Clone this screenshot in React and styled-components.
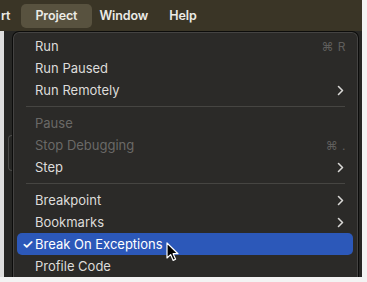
import React from "react";
import styled, { createGlobalStyle } from "styled-components";

const sections = [
  [
    { label: "Run", shortcut: "⌘ R" },
    { label: "Run Paused" },
    { label: "Run Remotely", submenu: true },
  ],
  [
    { label: "Pause", disabled: true },
    { label: "Stop Debugging", shortcut: "⌘ .", disabled: true },
    { label: "Step", submenu: true },
  ],
  [
    { label: "Breakpoint", submenu: true },
    { label: "Bookmarks", submenu: true },
    { label: "Break On Exceptions", checked: true, active: true },
    { label: "Profile Code" },
  ],
];

const Chevron = () => (
  <svg width="7" height="11" viewBox="0 0 7 11">
    <path d="M1.5 1.5 L5.5 5.5 L1.5 9.5" fill="none" stroke="currentColor" strokeWidth="1.6" strokeLinecap="round" strokeLinejoin="round" />
  </svg>
);

const Pointer = () => (
  <svg width="14" height="20" viewBox="0 0 14 20">
    <path d="M1 1 L1 16 L4.6 12.6 L7.2 18.4 L9.6 17.3 L7.1 11.7 L12 11.7 Z" fill="#000" stroke="#fff" strokeWidth="1.2" strokeLinejoin="round" />
  </svg>
);

const App = () => (
  <Page>
    <GlobalStyle />
    <Screen>
      <MenuBar>
        <BarItem $gap={11}>rt</BarItem>
        <BarItem $open $gap={7}>Project</BarItem>
        <BarItem $gap={21}>Window</BarItem>
        <BarItem>Help</BarItem>
      </MenuBar>
      <Desktop>
        <Ghost />
        <Menu>
          {sections.map((items, i) => (
            <React.Fragment key={i}>
              {i > 0 && <Separator />}
              {items.map((it) => (
                <Row key={it.label} $active={it.active} $disabled={it.disabled}>
                  <Check>{it.checked ? "✓" : ""}</Check>
                  <RowLabel>{it.label}</RowLabel>
                  {it.shortcut && <Shortcut>{it.shortcut}</Shortcut>}
                  {it.submenu && (
                    <Arrow>
                      <Chevron />
                    </Arrow>
                  )}
                  {it.active && (
                    <Cursor>
                      <Pointer />
                    </Cursor>
                  )}
                </Row>
              ))}
            </React.Fragment>
          ))}
        </Menu>
      </Desktop>
    </Screen>
  </Page>
);

const GlobalStyle = createGlobalStyle`
  html, body {
    margin: 0;
    padding: 0;
    background: #f3f3f3;
  }
  body {
    font-family: Inter, "Open Sans", sans-serif;
    -webkit-font-smoothing: antialiased;
  }
`;

const Page = styled.div`
  width: 367px;
  height: 282px;
  padding: 0 5px 0 0;
  box-sizing: border-box;
  overflow: hidden;
`;

const Screen = styled.div`
  height: 277px;
  background: #262624;
  display: flex;
  flex-direction: column;
  overflow: hidden;
`;

const MenuBar = styled.div`
  height: 31px;
  flex-shrink: 0;
  background: #3a3526;
  display: flex;
  align-items: center;
  padding-left: 1px;
`;

const BarItem = styled.div`
  height: 24px;
  display: flex;
  align-items: center;
  padding: ${(p) => (p.$open ? "0 15px 0 14px" : "0")};
  margin-right: ${(p) => p.$gap || 0}px;
  border-radius: 5px;
  background: ${(p) => (p.$open ? "#58523f" : "transparent")};
  color: #ecebe6;
  font-size: 12.5px;
  font-weight: 600;
  letter-spacing: -0.1px;
`;

const Desktop = styled.div`
  flex: 1;
  display: flex;
  align-items: flex-start;
  border-left: 4px solid #dedede;
  min-height: 0;
`;

const Ghost = styled.div`
  width: 3px;
  height: 34px;
  margin: 104px 0 0 4px;
  border: 1px solid #4a4a48;
  border-right: none;
  border-radius: 5px 0 0 5px;
  flex-shrink: 0;
`;

const Menu = styled.div`
  width: 347px;
  box-sizing: border-box;
  padding: 3px 5px 6px 4px;
  background: #2b2a28;
  border: 1px solid #0c0c0b;
  border-bottom: none;
  border-radius: 7px 7px 0 0;
  box-shadow: inset 0 0 0 1px rgba(255, 255, 255, 0.12);
  position: relative;
  z-index: 1;
`;

const Row = styled.div`
  position: relative;
  height: 22px;
  display: flex;
  align-items: center;
  padding: 0 9px 0 5px;
  border-radius: 5px;
  background: ${(p) => (p.$active ? "#2c58b9" : "transparent")};
  color: ${(p) => (p.$disabled ? "#6a6967" : p.$active ? "#ffffff" : "#dddcda")};
  font-size: 13px;
  font-weight: 400;
`;

const Check = styled.span`
  width: 13px;
  flex-shrink: 0;
  font-size: 13px;
  font-weight: 600;
`;

const RowLabel = styled.span`
  flex: 1;
  white-space: nowrap;
`;

const Shortcut = styled.span`
  color: #5f5e5c;
  font-size: 12px;
  letter-spacing: 0.5px;
  margin-right: -2px;
`;

const Arrow = styled.span`
  display: flex;
  align-items: center;
  color: #d8d7d5;
`;

const Separator = styled.div`
  height: 1px;
  margin: 5px 8px 5px 9px;
  background: #464542;
`;

const Cursor = styled.span`
  position: absolute;
  left: 149px;
  top: 9px;
  display: flex;
  z-index: 2;
`;

export default App;
